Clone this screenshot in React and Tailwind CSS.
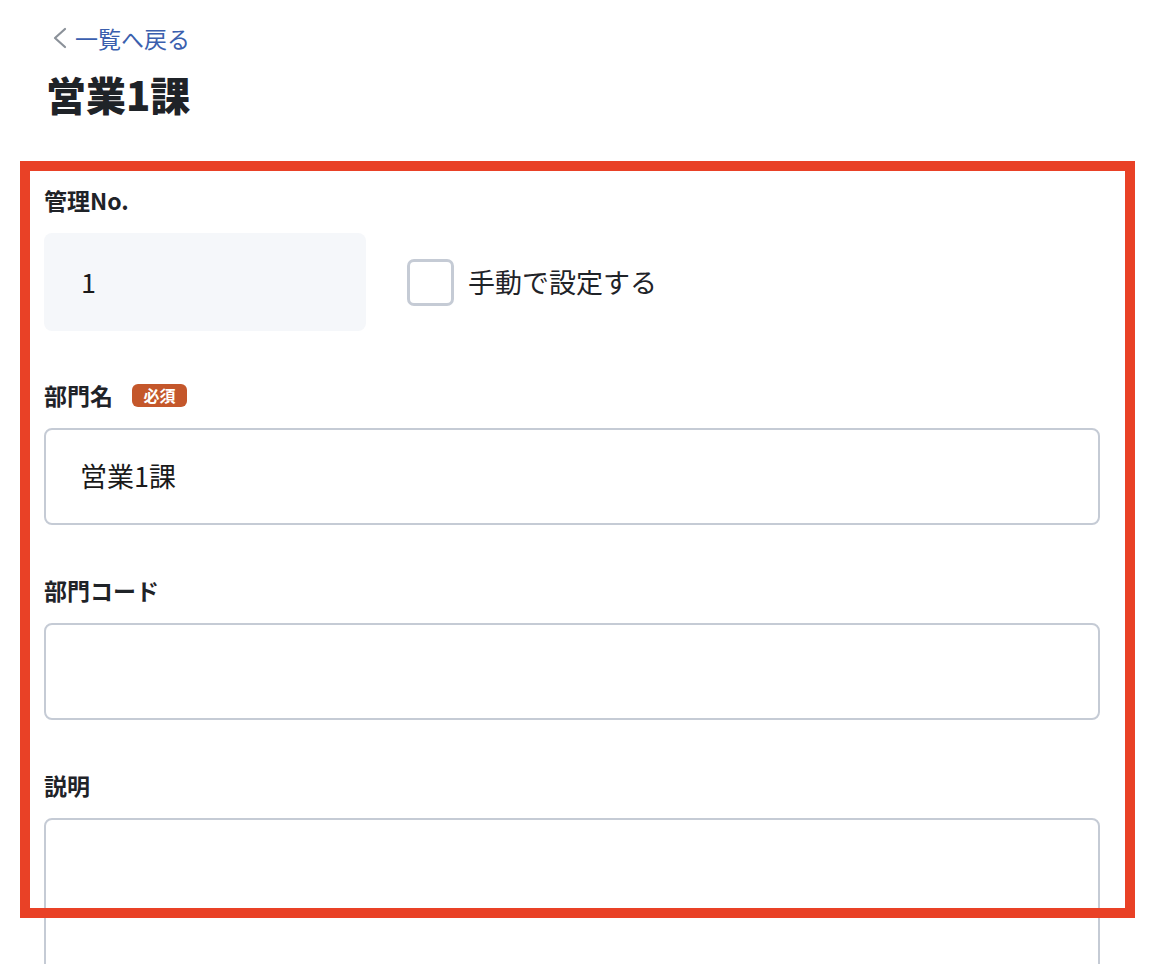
import React from 'react';

const font = { fontFamily: '"Noto Sans CJK JP", "Noto Sans", sans-serif' };

const Label = ({ children, required }) => (
  <div className="flex items-center h-[32px] mb-[17px]">
    <span className="text-[23px] leading-[32px] font-bold text-[#1f2328]">{children}</span>
    {required && (
      <span className="ml-[19px] h-[23px] w-[55px] rounded-[6px] bg-[#c4572b] text-white text-[16px] font-bold leading-[23px] text-center">
        必須
      </span>
    )}
  </div>
);

const TextInput = ({ value }) => (
  <div className="h-[97px] w-full rounded-[8px] border-2 border-[#c5cbd5] bg-white flex items-center pl-[34px] text-[27px] text-[#1a1a1a]">
    {value}
  </div>
);

export default function App() {
  return (
    <div style={font} className="relative h-screen bg-white overflow-hidden">
      <div className="pl-[44px] w-[1100px]">
        <a className="flex items-center h-[24px] mt-[26px] text-[23px] leading-[24px] text-[#3b5fae] cursor-pointer">
          <svg width="16" height="24" viewBox="0 0 16 24" className="ml-[8px] mr-[7px]">
            <polyline points="13,3 3,12 13,21" fill="none" stroke="#8b9199" strokeWidth="2.2" strokeLinecap="round" strokeLinejoin="round" />
          </svg>
          一覧へ戻る
        </a>
        <h1 className="mt-[16px] text-[40px] leading-[56px] font-black text-[#1f2328] pl-[2px]">営業1課</h1>

        <div className="mt-[62px]">
          <Label>管理No.</Label>
          <div className="flex items-center">
            <div className="h-[98px] w-[322px] rounded-[8px] bg-[#f5f7fa] flex items-center pl-[37px] text-[27px] text-[#1a1a1a]">
              1
            </div>
            <div className="ml-[41px] h-[47px] w-[47px] rounded-[7px] border-[3px] border-[#c5cbd5] bg-white" />
            <span className="ml-[14px] text-[27px] text-[#1f2328]">手動で設定する</span>
          </div>
        </div>

        <div className="mt-[48px]">
          <Label required>部門名</Label>
          <TextInput value="営業1課" />
        </div>

        <div className="mt-[49px]">
          <Label>部門コード</Label>
          <TextInput value="" />
        </div>

        <div className="mt-[49px]">
          <Label>説明</Label>
          <div className="h-[200px] w-full rounded-[8px] border-2 border-[#c5cbd5] bg-white" />
        </div>
      </div>

      <div className="absolute left-[20px] top-[161px] w-[1115px] h-[757px] border-[10px] border-[#e94126] pointer-events-none" />
    </div>
  );
}
